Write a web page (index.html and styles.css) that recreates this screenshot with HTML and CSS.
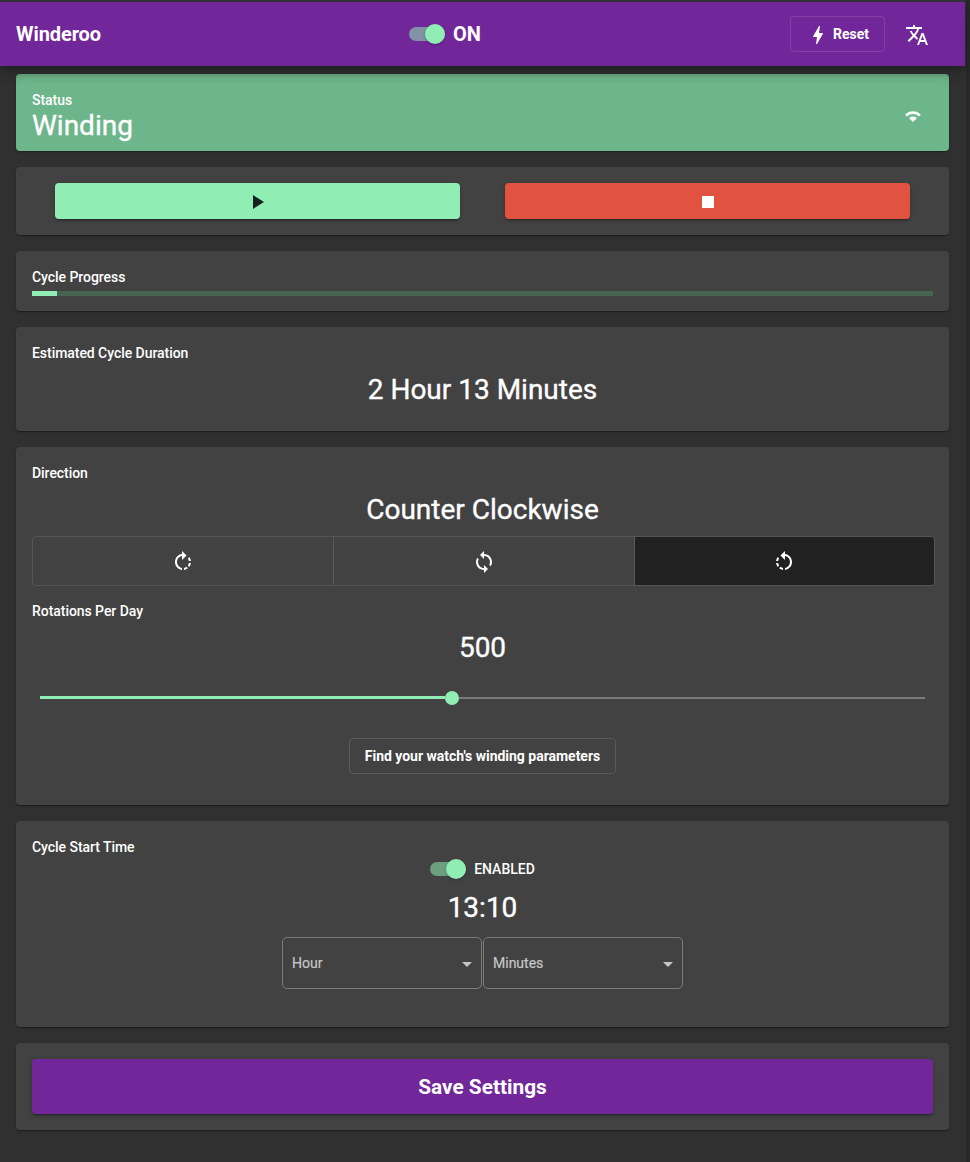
FILE: index.html
```html
<!DOCTYPE html>
<html lang="en">
<head>
<meta charset="utf-8">
<title>Winderoo</title>
<link rel="stylesheet" href="styles.css">
</head>
<body>
<div class="app">
  <header class="toolbar">
    <h1 class="brand">Winderoo</h1>
    <label class="switch power"><span class="track"><span class="thumb"></span></span><span class="on">ON</span></label>
    <div class="actions">
      <button class="outline reset"><svg class="icon" viewBox="0 0 24 24"><path d="M11 21h-1l1-7H7.5c-.58 0-.57-.32-.38-.66.19-.34.05-.08.07-.12C8.48 10.94 10.42 7.54 13 3h1l-1 7h3.5c.49 0 .56.33.47.51l-.07.15C12.96 17.55 11 21 11 21z"/></svg><span class="reset-text">Reset</span></button>
      <svg class="icon translate" viewBox="0 0 24 24"><path d="M12.87 15.07l-2.54-2.51.03-.03c1.74-1.94 2.98-4.17 3.71-6.53H17V4h-7V2H8v2H1v1.99h11.17C11.5 7.92 10.44 9.75 9 11.35 8.07 10.32 7.3 9.19 6.69 8h-2c.73 1.63 1.73 3.17 2.98 4.56l-5.09 5.02L4 19l5-5 3.11 3.11.76-2.04zM18.5 10h-2L12 22h2l1.12-3h4.75L21 22h2l-4.5-12zm-2.62 7l1.62-4.33L19.12 17h-3.24z"/></svg>
    </div>
  </header>
  <main class="cards">
    <section class="card status">
      <div><div class="label">Status</div><div class="state">Winding</div></div>
      <svg class="wifi" viewBox="0 0 16 12"><path d="M.1 3.7C4.5-.9 11.5-.9 15.9 3.7L14.1 5.5C10.7 2.2 5.3 2.2 1.9 5.5zM4 7.1C6 5 10 5 12 7.1L8 11.1z"/></svg>
    </section>
    <section class="card controls">
      <button class="control play"><svg class="icon" viewBox="0 0 24 24"><path d="M8 5v14l11-7z"/></svg></button>
      <button class="control stop"><svg class="icon" viewBox="0 0 24 24"><path d="M6 6h12v12H6z"/></svg></button>
    </section>
    <section class="card progress-card">
      <div class="label">Cycle Progress</div>
      <div class="progress"><div class="progress-fill"></div></div>
    </section>
    <section class="card duration">
      <div class="label">Estimated Cycle Duration</div>
      <div class="value">2 Hour 13 Minutes</div>
    </section>
    <section class="card settings">
      <div class="label">Direction</div>
      <div class="value">Counter Clockwise</div>
      <div class="group">
        <button class="option"><svg class="icon" viewBox="0 0 24 24"><path d="M15.55 5.55L11 1v3.07C7.06 4.56 4 7.92 4 12s3.05 7.44 7 7.93v-2.02c-2.84-.48-5-2.94-5-5.91s2.16-5.43 5-5.91V10l4.55-4.45zM19.93 11c-.17-1.39-.72-2.73-1.62-3.89l-1.42 1.42c.54.75.88 1.6 1.02 2.47h2.02zM13 17.9v2.02c1.39-.17 2.74-.71 3.9-1.61l-1.44-1.44c-.75.54-1.59.89-2.46 1.03zm3.89-2.42l1.42 1.41c.9-1.16 1.45-2.5 1.62-3.89h-2.02c-.14.87-.48 1.72-1.02 2.48z"/></svg></button>
        <button class="option"><svg class="icon" viewBox="0 0 24 24"><path d="M12 4V1L8 5l4 4V6c3.31 0 6 2.69 6 6 0 1.01-.25 1.97-.7 2.8l1.46 1.46C19.54 15.03 20 13.57 20 12c0-4.42-3.58-8-8-8zm0 14c-3.31 0-6-2.69-6-6 0-1.01.25-1.97.7-2.8L5.24 7.74C4.46 8.97 4 10.43 4 12c0 4.42 3.58 8 8 8v3l4-4-4-4v3z"/></svg></button>
        <button class="option selected"><svg class="icon" viewBox="0 0 24 24"><path d="M7.11 8.53L5.7 7.11C4.8 8.27 4.24 9.61 4.07 11h2.02c.14-.87.49-1.72 1.02-2.47zM6.09 13H4.07c.17 1.39.72 2.73 1.62 3.89l1.41-1.42c-.52-.75-.87-1.59-1.01-2.47zm1.01 5.32c1.16.9 2.51 1.44 3.9 1.61V17.9c-.87-.15-1.71-.49-2.46-1.03L7.1 18.32zM13 4.07V1L8.45 5.55 13 10V6.09c2.84.48 5 2.94 5 5.91s-2.16 5.43-5 5.91v2.02c3.95-.49 7-3.85 7-7.93s-3.05-7.44-7-7.93z"/></svg></button>
      </div>
      <div class="label rpd">Rotations Per Day</div>
      <div class="value">500</div>
      <div class="slider"><div class="slider-fill"></div><div class="slider-thumb"></div><div class="slider-rest"></div></div>
      <button class="outline find">Find your watch's winding parameters</button>
    </section>
    <section class="card start">
      <div class="label">Cycle Start Time</div>
      <label class="switch timer"><span class="track"><span class="thumb"></span></span><span class="enabled">ENABLED</span></label>
      <div class="time">13:10</div>
      <div class="selects">
        <div class="select"><span class="select-hour">Hour</span><span class="arrow"></span></div>
        <div class="select"><span class="select-minutes">Minutes</span><span class="arrow"></span></div>
      </div>
    </section>
    <section class="card">
      <button class="save"><span class="save-text">Save Settings</span></button>
    </section>
  </main>
</div>
</body>
</html>
```
FILE: styles.css
```css
* { box-sizing: border-box; }
body {
  margin: 0;
  height: 1162px;
  overflow: hidden;
  background: #27292a;
  color: #fff;
  font: 400 14px/20px Roboto, sans-serif;
}
button {
  margin: 0;
  padding: 0;
  border: 0;
  color: inherit;
  font: inherit;
  background: none;
}
svg { display: block; fill: currentColor; }
.icon { width: 24px; height: 24px; }
.app {
  width: 966px;
  height: 1162px;
  padding-right: 1px;
  border-top: 2px solid #353437;
  background: #303030;
}
.toolbar {
  position: relative;
  display: grid;
  grid-template-columns: 393px auto 1fr;
  align-items: center;
  height: 64px;
  padding: 0 36px 0 16px;
  background: #71269a;
  box-shadow: 0 3px 5px -1px rgba(0,0,0,.2), 0 6px 10px rgba(0,0,0,.14), 0 1px 18px rgba(0,0,0,.12);
}
.brand { margin: 0; font-size: 20px; font-weight: 700; letter-spacing: -.08px; }
.switch { display: flex; align-items: center; gap: 8px; }
.track {
  display: flex;
  justify-content: flex-end;
  align-items: center;
  width: 36px;
  height: 14px;
  border-radius: 7px;
  background: rgba(144,238,180,.54);
}
.thumb {
  flex: none;
  width: 20px;
  height: 20px;
  border-radius: 50%;
  background: #90eeb4;
  box-shadow: 0 1px 3px rgba(0,0,0,.25);
}
.on { font-size: 20px; font-weight: 700; }
.actions { display: flex; justify-content: flex-end; align-items: center; gap: 20px; }
.translate { margin-top: 2px; }
.outline { border: 1px solid rgba(255,255,255,.12); border-radius: 4px; font-weight: 700; }
.reset {
  display: flex;
  align-items: center;
  gap: 3px;
  width: 95px;
  height: 36px;
  padding-left: 15px;
}
.reset .icon { margin-top: 1px; }
.cards {
  display: flex;
  flex-direction: column;
  gap: 16px;
  padding: 8px 16px;
}
.card {
  padding: 16px;
  border-radius: 4px;
  background: #424242;
  box-shadow: 0 2px 1px -1px rgba(0,0,0,.2), 0 1px 1px rgba(0,0,0,.14), 0 1px 3px rgba(0,0,0,.12);
}
.label { font-weight: 500; letter-spacing: -.05px; }
.status {
  display: flex;
  justify-content: space-between;
  height: 77px;
  padding-right: 28px;
  background: #6db58b;
}
.status, .controls { flex: none; }
.cards .status { box-shadow: inset 0 7px 8px -7px rgba(0,0,0,.18), 0 2px 1px -1px rgba(0,0,0,.2), 0 1px 3px rgba(0,0,0,.2); }
.state, .value, .time { font-size: 28px; line-height: 32px; -webkit-text-stroke: .35px currentColor; }
.wifi { width: 16px; height: 12px; margin-top: 21px; }
.controls { display: flex; justify-content: space-around; height: 68px; }
.control {
  display: flex;
  justify-content: center;
  align-items: center;
  width: 45%;
  height: 36px;
  border-radius: 4px;
  box-shadow: 0 3px 1px -2px rgba(0,0,0,.2), 0 2px 2px rgba(0,0,0,.14), 0 1px 5px rgba(0,0,0,.12);
}
.control .icon { margin-top: 2px; }
.play { background: #90eeb4; color: #14231b; }
.stop { background: #e25241; }
.progress-card { height: 60px; }
.progress { height: 5px; margin-top: 4px; background: #486352; }
.progress-fill { width: 25px; height: 5px; background: #90eeb4; }
.duration { height: 104px; }
.value { margin-top: 11px; text-align: center; }
.settings { height: 358px; }
.group {
  display: grid;
  grid-template-columns: repeat(3, 1fr);
  width: 903px;
  height: 50px;
  margin-top: 10px;
  border-radius: 4px;
  overflow: hidden;
  border: 1px solid #555;
}
.option { display: flex; justify-content: center; align-items: center; padding-top: 2px; }
.option + .option { border-left: 1px solid #595959; }
.selected { background: #212121; }
.rpd { margin-top: 15px; }
.slider { display: flex; align-items: center; height: 14px; margin: 26.5px 8px 0; }
.slider-fill { width: 405px; height: 3px; background: #90eeb4; }
.slider-thumb { width: 14px; height: 14px; border-radius: 50%; background: #90eeb4; }
.slider-rest { flex: 1; height: 2px; background: #7b7b7b; }
.find { display: block; width: 267px; height: 36px; margin: 33px auto 0; letter-spacing: -.02px; }
.start { height: 206px; }
.timer { justify-content: center; height: 20px; margin-top: 2px; }
.enabled { font-weight: 500; }
.time { margin-top: 13px; text-align: center; }
.selects { display: flex; justify-content: center; gap: 1px; margin-top: 13px; }
.select {
  display: flex;
  justify-content: space-between;
  align-items: center;
  width: 200px;
  height: 52px;
  padding: 0 9px;
  border: 1px solid #7b7b7b;
  border-radius: 5px;
  color: #c6c6c6;
  -webkit-text-stroke: .2px currentColor;
}
.arrow { border: 5px solid transparent; border-top-color: #c6c6c6; border-bottom: 0; margin-top: 3px; }
.save {
  display: block;
  width: 100%;
  height: 55px;
  border-radius: 4px;
  background: #71269a;
  font-size: 20.8px;
  font-weight: 700;
  box-shadow: 0 3px 1px -2px rgba(0,0,0,.2), 0 2px 2px rgba(0,0,0,.14), 0 1px 5px rgba(0,0,0,.12);
}
```
